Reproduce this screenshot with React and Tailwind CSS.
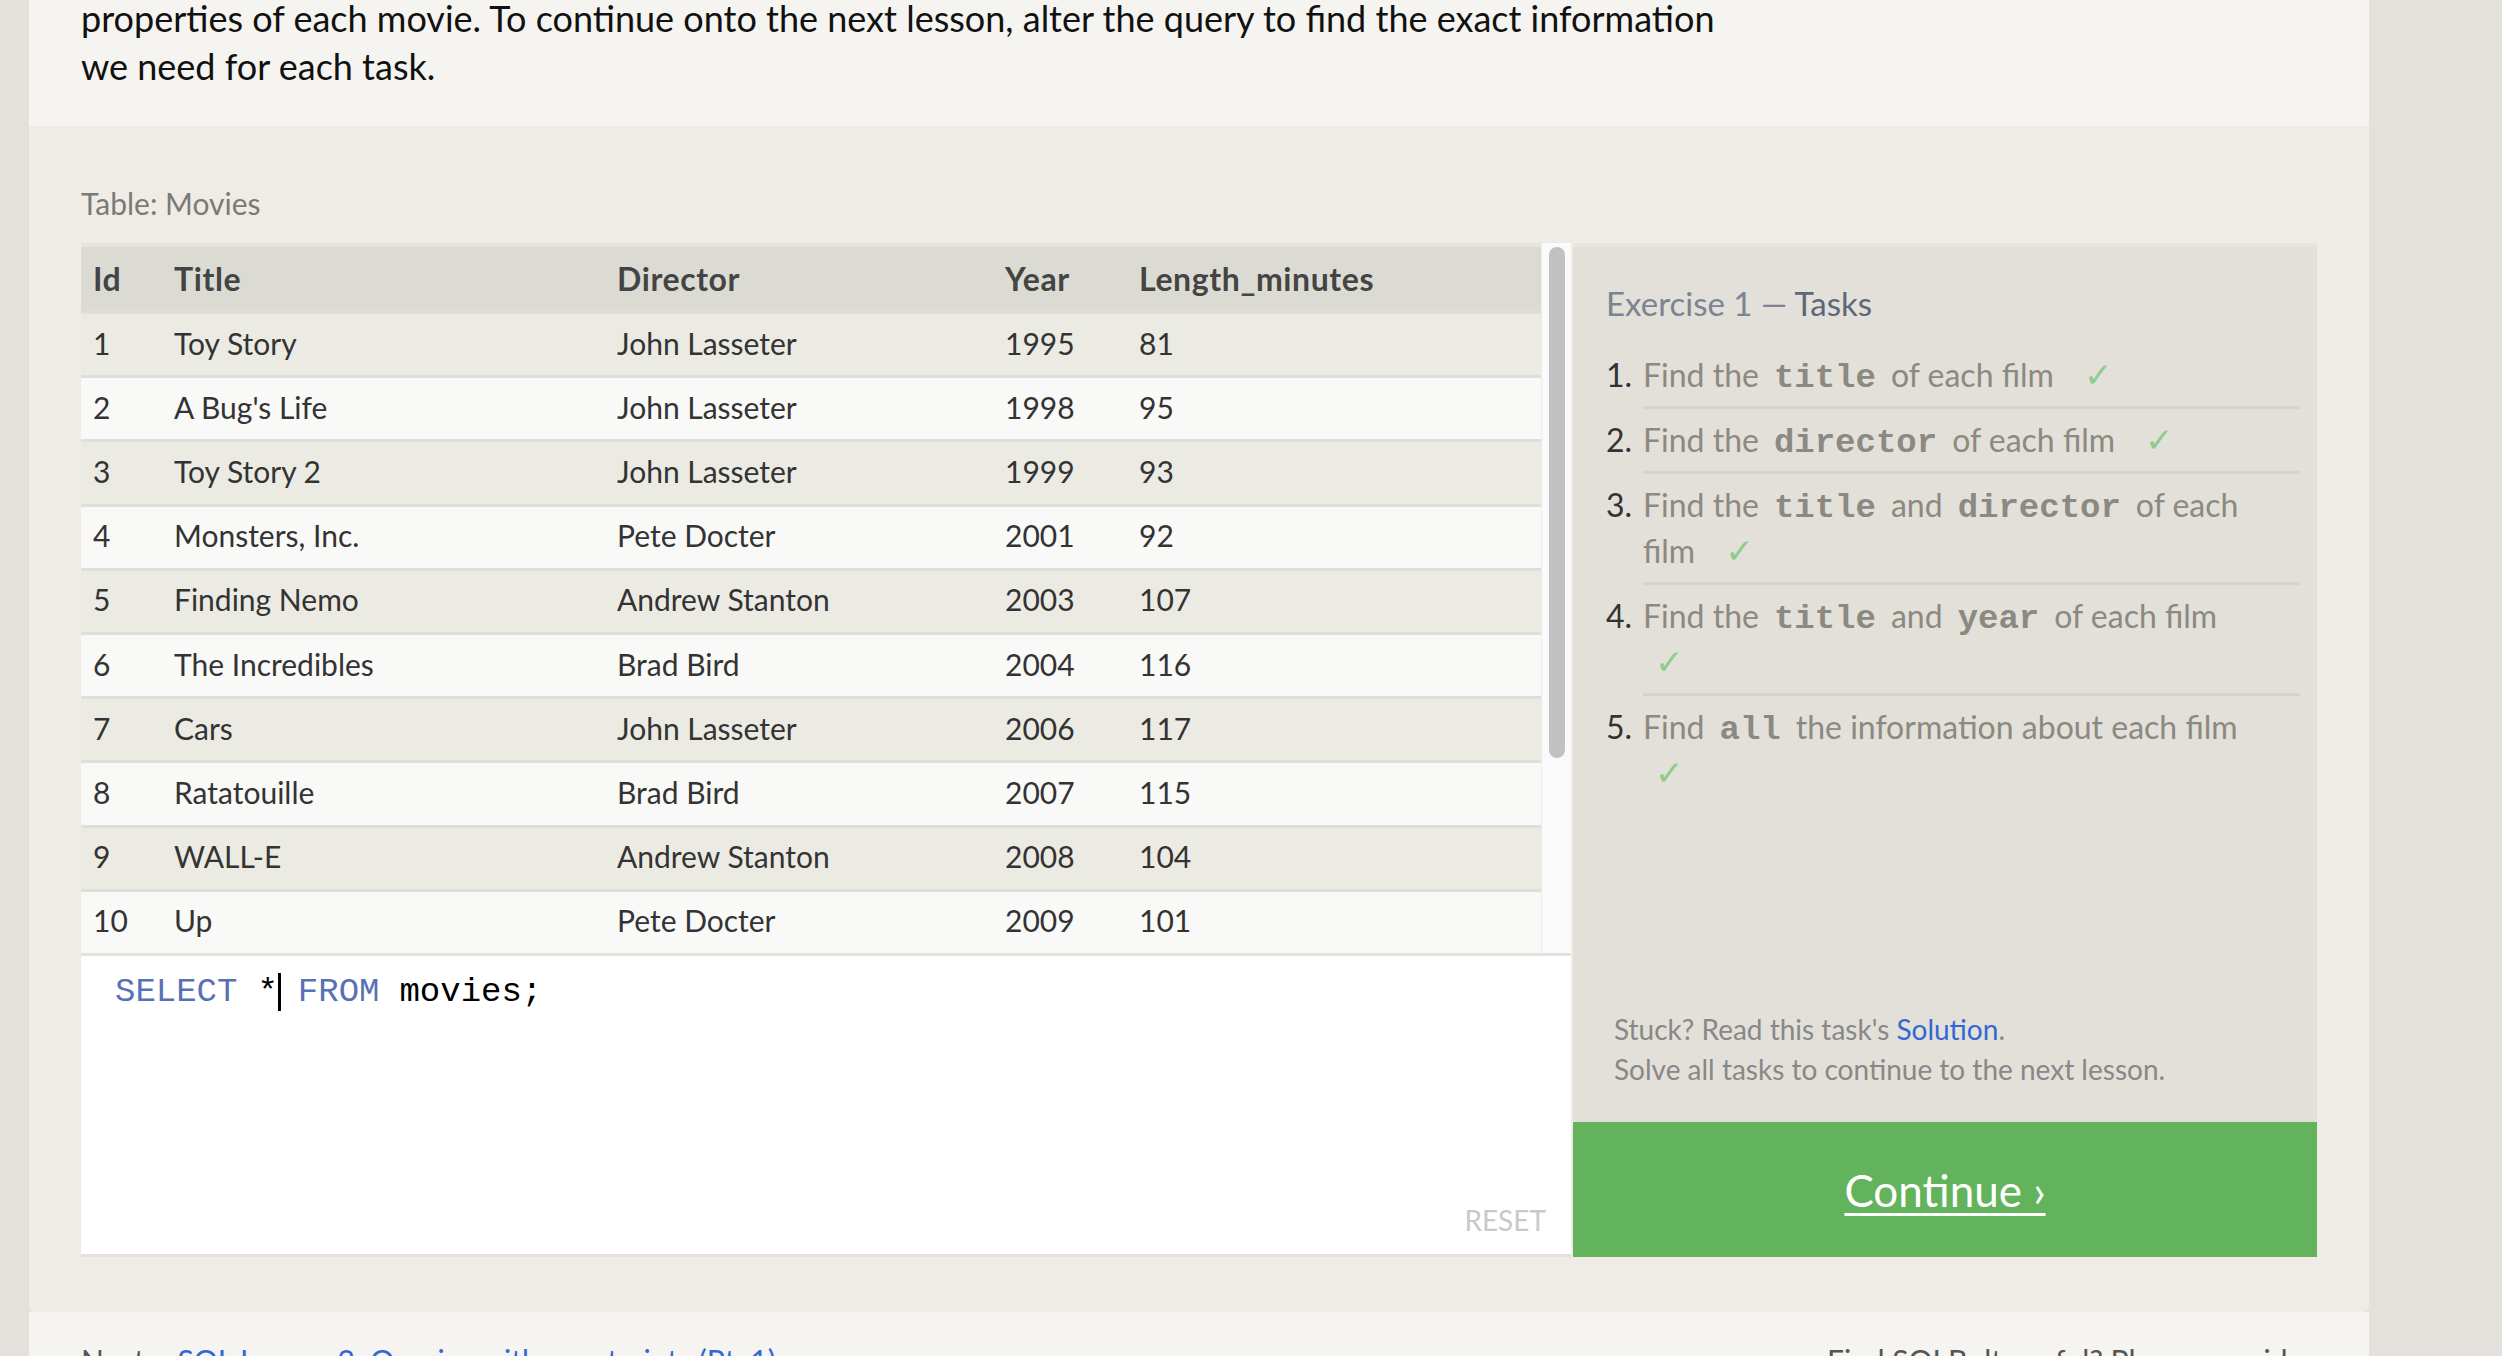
import React from 'react'

const movies = [
  [1, 'Toy Story', 'John Lasseter', 1995, 81],
  [2, "A Bug's Life", 'John Lasseter', 1998, 95],
  [3, 'Toy Story 2', 'John Lasseter', 1999, 93],
  [4, 'Monsters, Inc.', 'Pete Docter', 2001, 92],
  [5, 'Finding Nemo', 'Andrew Stanton', 2003, 107],
  [6, 'The Incredibles', 'Brad Bird', 2004, 116],
  [7, 'Cars', 'John Lasseter', 2006, 117],
  [8, 'Ratatouille', 'Brad Bird', 2007, 115],
  [9, 'WALL-E', 'Andrew Stanton', 2008, 104],
  [10, 'Up', 'Pete Docter', 2009, 101],
]

const cols = 'grid grid-cols-[81px_443px_388px_134px_1fr]'

function Code({ children }) {
  return (
    <code className="font-['Liberation_Mono',monospace] font-bold text-[34px] leading-none mx-[15px] text-[#8b8981]">
      {children}
    </code>
  )
}

// check mark after the text, or alone on its own line
function Check({ alone }) {
  return (
    <span
      className={
        (alone ? 'ml-[12px] ' : 'ml-[30px] ') +
        "leading-none text-[#8fcb8a] font-['DejaVu_Sans',sans-serif] text-[34px]"
      }
    >
      ✓
    </span>
  )
}

function Task({ n, last, children }) {
  return (
    <li className="flex">
      <span className="w-[37px] shrink-0 text-[#333] pt-[8px]">{n}.</span>
      <div className={'flex-1 pt-[8px] pb-[8px] text-[#8b8981] ' + (last ? '' : 'border-b-[3px] border-[#d6d4cb]')}>
        {children}
      </div>
    </li>
  )
}

export default function App() {
  return (
    <div className="h-[1356px] overflow-hidden bg-[#e4e1dc] font-['Lato','Open_Sans',sans-serif]">
      <div className="ml-[29px] w-[2340px] flex flex-col">
        {/* intro text */}
        <div className="bg-[#f5f4f0] px-[52px] pb-[36px]">
          <p className="-mt-[6px] text-[36px] leading-[48px] text-[#111]">
            properties of each movie. To continue onto the next lesson, alter the query to find the exact information
            <br />
            we need for each task.
          </p>
        </div>

        {/* exercise */}
        <div className="bg-[#efece5] px-[52px] pt-[57px] pb-[55px] rounded-b-[6px]">
          <div className="text-[30px] leading-[40px] text-[#7a7a7a] mb-[20px]">Table: Movies</div>

          <div className="flex h-[1014px]">
            <div className="w-[1490px] flex flex-col">
              <div className="flex h-[710px] bg-[#fafafa]">
                <div className="flex-1 text-[30px] text-[#333]">
                  <div
                    className={
                      cols +
                      ' h-[68px] items-center bg-[#dcdbd3] border-t-4 border-[#e6e4de] text-[32px] font-bold tracking-[0.6px] text-[#444]'
                    }
                  >
                    <div className="pl-3">Id</div>
                    <div className="pl-3">Title</div>
                    <div className="pl-3">Director</div>
                    <div className="pl-3">Year</div>
                    <div className="pl-3">Length_minutes</div>
                  </div>
                  {movies.map((m, i) => (
                    <div
                      key={m[0]}
                      className={
                        cols +
                        ' h-[64.2px] items-center border-t-[3px] border-[#dfded9] ' +
                        (i % 2 === 0 ? 'bg-[#ebeae3]' : 'bg-[#f9f9f8]')
                      }
                    >
                      {m.map((v, j) => (
                        <div key={j} className="pl-3 -mt-[3px]">
                          {v}
                        </div>
                      ))}
                    </div>
                  ))}
                </div>
                <div className="w-[30px] bg-[#fafafa] border-l border-[#ececec] pt-[4px] flex justify-center">
                  <div className="w-[16px] h-[511px] rounded-full bg-[#c1c1c1]"></div>
                </div>
              </div>

              <div className="flex-1 bg-white border-t-[3px] border-b-[3px] border-[#e4e2dc] flex flex-col justify-between pl-[34px] pr-[25px] pt-[14px] pb-[14px]">
                <div className="font-['Liberation_Mono',monospace] text-[34px] leading-[44px] text-black flex items-center">
                  <span className="text-[#5870b6]">SELECT</span>
                  <span className="ml-[20px]">*</span>
                  <span className="inline-block w-[3px] h-[38px] bg-black"></span>
                  <span className="ml-[17px] text-[#5870b6]">FROM</span>
                  <span className="ml-[20px]">movies;</span>
                </div>
                <div className="self-end text-[28px] leading-[40px] text-[#c9c9c9]">RESET</div>
              </div>
            </div>

            <div className="w-[744px] ml-[2px] flex flex-col">
              <div className="flex-1 bg-[#e2e0d8] border-t-4 border-[#e8e6e0] pl-[33px] pr-[17px] pt-[33px] pb-[33px] flex flex-col">
                <h2 className="text-[33px] leading-[46px] text-[#7b8394]">
                  Exercise 1 — <span className="text-[#5e6678]">Tasks</span>
                </h2>
                <ol className="mt-[18px] text-[32px] leading-[46px]">
                  <Task n={1}>
                    Find the<Code>title</Code>of each film<Check />
                  </Task>
                  <Task n={2}>
                    Find the<Code>director</Code>of each film<Check />
                  </Task>
                  <Task n={3}>
                    Find the<Code>title</Code>and<Code>director</Code>of each
                    <br />
                    film<Check />
                  </Task>
                  <Task n={4}>
                    Find the<Code>title</Code>and<Code>year</Code>of each film
                    <br />
                    <Check alone />
                  </Task>
                  <Task n={5} last>
                    Find<Code>all</Code>the information about each film
                    <br />
                    <Check alone />
                  </Task>
                </ol>
                <div className="mt-auto pl-[8px] text-[28px] leading-[40px] text-[#888]">
                  <p>
                    Stuck? Read this task's <a className="text-[#3367d6]">Solution</a>.
                  </p>
                  <p>Solve all tasks to continue to the next lesson.</p>
                </div>
              </div>
              <div className="h-[135px] bg-[#62b35b] flex items-center justify-center">
                <a className="text-white text-[44px] underline decoration-[3px] underline-offset-[6px]">Continue ›</a>
              </div>
            </div>
          </div>
        </div>

        {/* footer */}
        <div className="bg-[#f5f4f0] px-[52px] pt-[28px] flex text-[30px] leading-[40px]">
          <div className="w-[1746px] text-[#555]">
            Next – <a className="text-[#3367d6]">SQL Lesson 2: Queries with constraints (Pt. 1)</a>
          </div>
          <div className="text-[#555]">Find SQLBolt useful? Please consider</div>
        </div>
      </div>
    </div>
  )
}
